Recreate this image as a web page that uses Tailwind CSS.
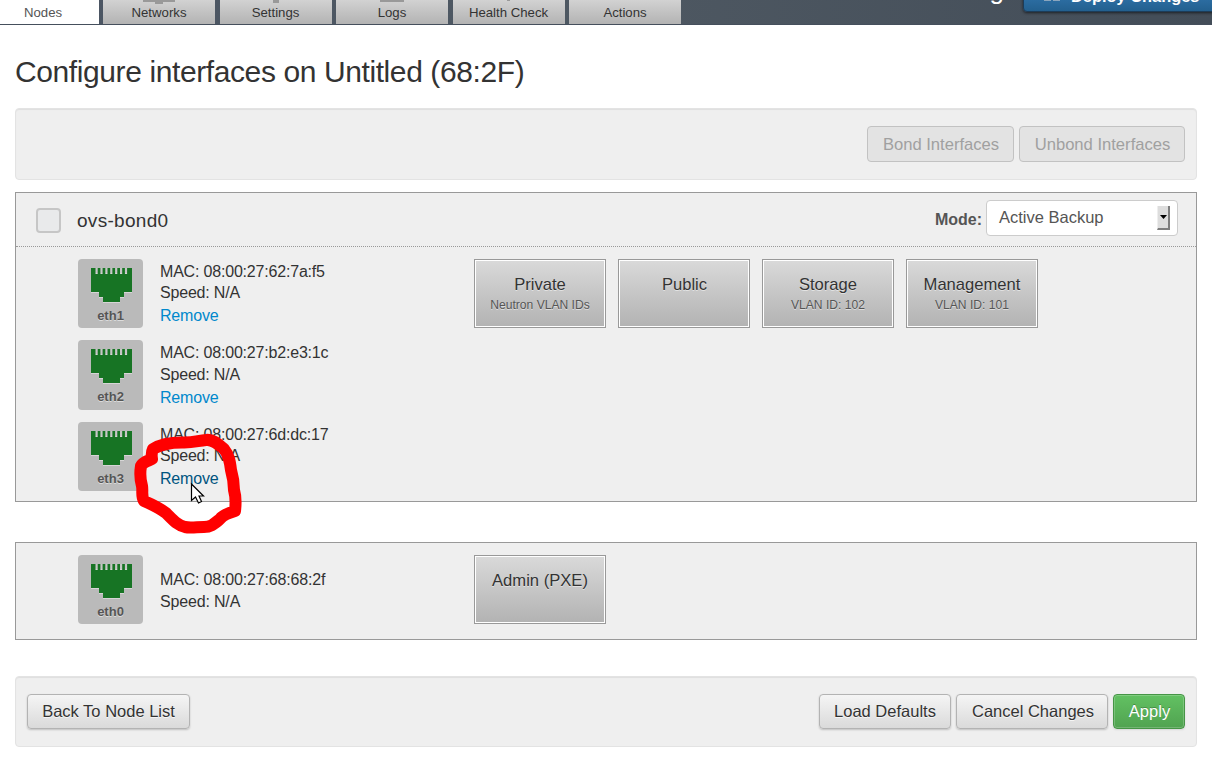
<!DOCTYPE html>
<html lang="en">
<head>
<meta charset="utf-8">
<title>Configure interfaces</title>
<script src="https://cdn.jsdelivr.net/npm/@tailwindcss/browser@4"></script>
</head>
<body class="w-[1212px] h-[762px] overflow-hidden relative bg-white text-[#333] font-['Liberation_Sans',sans-serif]">
<svg class="hidden">
  <symbol id="port" viewBox="0 0 41 36">
    <path fill="#d6d6d6" d="M0 1h41v24h-8v5h-4v5H12v-5H8v-5H0z"/>
    <path fill="#c6c6c6" d="M4 0h33v5H4z"/>
    <path fill="#177424" d="M0 0h4.500v6h2.200V0h2.700v6h2.200V0h2.700v6h2.200V0h2.700v6h2.200V0h2.700v6h2.200V0h2.700v6h2.200V0h2.700v6h2.200V0H41v24h-8v5h-4v5H12v-5H8v-5H0z"/>
  </symbol>
</svg>

<header class="h-[25px] flex items-start overflow-hidden bg-linear-to-r from-[#4b5563] via-[#4e5862] to-[#434d58] border-b border-[#454f5c]">
  <nav class="flex text-[13.2px] leading-[15px] text-center text-[#333]">
    <div class="w-[99px] h-[25px] bg-white pr-[13px] pt-[5px] text-[#555]">Nodes</div>
    <div class="flex gap-[4.500px] pl-[4px]">
      <div class="w-[112px] h-6 bg-linear-to-b from-[#d2d2d2] to-[#b3b3b3] flex flex-col items-center">
        <svg class="w-8 h-[5px]" viewBox="0 0 32 5"><path fill="#999" d="M0 0h32v2H20v2H12V2H0z"/></svg>Networks</div>
      <div class="w-[112px] h-6 bg-linear-to-b from-[#d2d2d2] to-[#b3b3b3] flex flex-col items-center">
        <svg class="w-8 h-[5px]" viewBox="0 0 32 5"><path fill="#999" d="M13 0h6v3h-6z"/></svg>Settings</div>
      <div class="w-[112px] h-6 bg-linear-to-b from-[#d2d2d2] to-[#b3b3b3] flex flex-col items-center">
        <svg class="w-8 h-[5px]" viewBox="0 0 32 5"><path fill="#999" d="M4 0h24v2H4z"/></svg>Logs</div>
      <div class="w-[112px] h-6 bg-linear-to-b from-[#d2d2d2] to-[#b3b3b3] flex flex-col items-center">
        <svg class="w-8 h-[5px]" viewBox="0 0 32 5"><path fill="#999" d="M14 0h3v1h-3z"/></svg>Health Check</div>
      <div class="w-[112px] h-6 bg-linear-to-b from-[#d2d2d2] to-[#b3b3b3] pt-[5px]">Actions</div>
    </div>
  </nav>
  <div class="ml-auto flex items-start">
    <div class="-mt-[25px] mr-[19px] text-[26px] leading-[30px] text-white">g</div>
    <button class="-mt-[24px] h-[36px] w-[230px] -mr-[41px] rounded-[4px] border border-[#1d3c58] bg-linear-to-b from-[#3d86c6] to-[#23608f] shadow-[0_1px_3px_rgba(0,0,0,.6)] flex items-start pl-[20px] pt-[9px] text-[16.4px] leading-[20px] font-bold text-white whitespace-nowrap text-shadow-[0_-1px_0_rgba(0,0,0,.25)]">
      <svg class="w-4 h-[15px] mr-[11px]" viewBox="0 0 16 15"><path fill="#8aa5bd" d="M0 0h7v15H0zM9 0h7v15H9z"/></svg>Deploy Changes</button>
  </div>
</header>

<main class="px-[15px]">
  <h1 class="mt-[27px] h-[40px] leading-[40px] text-[30px] tracking-[-0.4px] whitespace-nowrap">Configure interfaces on Untitled (68:2F)</h1>

  <div class="mt-[16px] h-[72px] rounded-[4px] bg-[#efefef] border border-[#e3e3e3] shadow-[inset_0_1px_1px_rgba(0,0,0,.07)] flex justify-end gap-[5px] pt-[17px] pr-[11px] text-[16.6px] text-[#a0a0a0] text-shadow-[0_1px_0_rgba(255,255,255,.8)]">
    <button class="w-[147px] h-[36px] rounded-[4px] border border-[#c2c2c2] bg-[#e3e3e3] pt-[2px] pl-px">Bond Interfaces</button>
    <button class="w-[166px] h-[36px] rounded-[4px] border border-[#c2c2c2] bg-[#e3e3e3] pt-[2px] pl-px">Unbond Interfaces</button>
  </div>

  <section class="mt-[12px] h-[310px] border border-[#999] bg-[#efefef]">
    <div class="h-[54px] border-b border-dotted border-[#999] flex items-center pl-[20px] pr-[18px]">
      <span class="size-[25px] rounded-[4px] border-2 border-[#c6c6c6] bg-[#e9eaeb] mt-px"></span>
      <span class="ml-[16px] mt-[2px] text-[19px] tracking-[0.3px] leading-[24px]">ovs-bond0</span>
      <span class="ml-auto text-[16px] font-bold text-[#555]">Mode:</span>
      <span class="ml-[4px] mb-[3px] w-[192px] h-[36px] rounded-[4px] border border-[#ccc] bg-white flex items-center justify-between pl-[12px] pr-[7px] text-[16.5px] text-[#555]">
        <span class="pb-[2px]">Active Backup</span>
        <span class="w-[13px] h-[24px] bg-[#ddd] border-r-2 border-b-2 border-[#7d7d7d] border-l border-l-[#eee] flex items-center justify-center"><svg class="w-[7px] h-1" viewBox="0 0 7 4"><path d="M0 0h7L3.500 4z"/></svg></span>
      </span>
    </div>
    <div class="flex pl-[62px] pt-[12px]">
      <div class="w-[396px] flex flex-col text-[16px] tracking-[-0.19px]">
        <div class="flex h-[81px] gap-[17px]">
          <div class="w-[65px] h-[69px] rounded-[4px] bg-[#bababa] flex flex-col items-center pt-[9px]"><svg class="w-[41px] h-[36px] ml-[2px]"><use href="#port"/></svg><b class="mt-[4px] text-[13px] leading-[15px] tracking-normal text-[#555] text-shadow-[0_1px_0_rgba(255,255,255,.5)]">eth1</b></div>
          <div class="pt-[2px]"><p class="leading-[21px]">MAC: 08:00:27:62:7a:f5</p><p class="leading-[21px]">Speed: N/A</p><a class="block leading-[25px] text-[#08c]">Remove</a></div>
        </div>
        <div class="flex h-[82px] gap-[17px]">
          <div class="w-[65px] h-[70px] rounded-[4px] bg-[#bababa] flex flex-col items-center pt-[9px]"><svg class="w-[41px] h-[36px] ml-[2px]"><use href="#port"/></svg><b class="mt-[4px] text-[13px] leading-[15px] tracking-normal text-[#555] text-shadow-[0_1px_0_rgba(255,255,255,.5)]">eth2</b></div>
          <div class="pt-[2px]"><p class="leading-[21px]">MAC: 08:00:27:b2:e3:1c</p><p class="leading-[23px]">Speed: N/A</p><a class="block leading-[23px] text-[#08c]">Remove</a></div>
        </div>
        <div class="flex h-[69px] gap-[17px]">
          <div class="w-[65px] h-[69px] rounded-[4px] bg-[#bababa] flex flex-col items-center pt-[9px]"><svg class="w-[41px] h-[36px] ml-[2px]"><use href="#port"/></svg><b class="mt-[4px] text-[13px] leading-[15px] tracking-normal text-[#555] text-shadow-[0_1px_0_rgba(255,255,255,.5)]">eth3</b></div>
          <div class="pt-[2px]"><p class="leading-[21px]">MAC: 08:00:27:6d:dc:17</p><p class="leading-[21px]">Speed: N/A</p><a class="block leading-[25px] text-[#005580]">Remove</a></div>
        </div>
      </div>
      <div class="flex gap-[12px] text-center text-[16.6px] leading-[20px] text-shadow-[0_1px_0_rgba(255,255,255,.5)]">
        <div class="w-[132px] h-[69px] border border-[#999] bg-white p-px"><div class="h-full bg-linear-to-b from-[#d9d9d9] to-[#b3b3b3] pt-[14px]">Private<small class="block text-[12.1px] text-[#555]">Neutron VLAN IDs</small></div></div>
        <div class="w-[132px] h-[69px] border border-[#999] bg-white p-px"><div class="h-full bg-linear-to-b from-[#d9d9d9] to-[#b3b3b3] pt-[14px] pl-px">Public</div></div>
        <div class="w-[132px] h-[69px] border border-[#999] bg-white p-px"><div class="h-full bg-linear-to-b from-[#d9d9d9] to-[#b3b3b3] pt-[14px]">Storage<small class="block text-[12.1px] text-[#555]">VLAN ID: 102</small></div></div>
        <div class="w-[132px] h-[69px] border border-[#999] bg-white p-px"><div class="h-full bg-linear-to-b from-[#d9d9d9] to-[#b3b3b3] pt-[14px]">Management<small class="block text-[12.1px] text-[#555]">VLAN ID: 101</small></div></div>
      </div>
    </div>
  </section>

  <section class="mt-[40px] h-[98px] border border-[#999] bg-[#efefef] flex pl-[62px] pt-[12px]">
    <div class="w-[396px] flex gap-[17px] text-[16px] tracking-[-0.17px]">
      <div class="w-[65px] h-[69px] rounded-[4px] bg-[#bababa] flex flex-col items-center pt-[9px]"><svg class="w-[41px] h-[36px] ml-[2px]"><use href="#port"/></svg><b class="mt-[4px] text-[13px] leading-[15px] tracking-normal text-[#555] text-shadow-[0_1px_0_rgba(255,255,255,.5)]">eth0</b></div>
      <div class="pt-[14px] leading-[22px]"><p>MAC: 08:00:27:68:68:2f</p><p>Speed: N/A</p></div>
    </div>
    <div class="w-[132px] h-[69px] border border-[#999] bg-white p-px text-center text-[16.6px] leading-[20px] text-shadow-[0_1px_0_rgba(255,255,255,.5)]"><div class="h-full bg-linear-to-b from-[#d9d9d9] to-[#b3b3b3] pt-[14px]">Admin (PXE)</div></div>
  </section>

  <footer class="mt-[36px] h-[71px] rounded-[4px] bg-[#efefef] border border-[#e3e3e3] shadow-[inset_0_1px_1px_rgba(0,0,0,.07)] flex gap-[5px] pt-[17px] px-[11px] text-[16.500px]">
    <button class="mr-auto w-[163px] h-[35px] rounded-[4px] border border-[#b3b3b3] bg-linear-to-b from-[#f5f5f5] to-[#dadada] shadow-[0_1px_2px_rgba(0,0,0,.2)] text-shadow-[0_1px_0_rgba(255,255,255,.7)]">Back To Node List</button>
    <button class="w-[132px] h-[35px] rounded-[4px] border border-[#b3b3b3] bg-linear-to-b from-[#f5f5f5] to-[#dadada] shadow-[0_1px_2px_rgba(0,0,0,.2)] text-shadow-[0_1px_0_rgba(255,255,255,.7)]">Load Defaults</button>
    <button class="w-[152px] h-[35px] rounded-[4px] border border-[#b3b3b3] bg-linear-to-b from-[#f5f5f5] to-[#dadada] shadow-[0_1px_2px_rgba(0,0,0,.2)] text-shadow-[0_1px_0_rgba(255,255,255,.7)] pl-[2px]">Cancel Changes</button>
    <button class="w-[72px] h-[35px] rounded-[4px] border border-[#469546] bg-linear-to-b from-[#62c162] to-[#51a351] shadow-[inset_0_0_0_1px_rgba(255,255,255,.2),0_1px_2px_rgba(0,0,0,.1)] text-white text-shadow-[0_-1px_0_rgba(0,0,0,.25)] pl-px">Apply</button>
  </footer>
</main>

<!-- Hand-drawn annotation and mouse pointer -->
<svg class="absolute left-[120px] top-[410px] size-[140px]" viewBox="0 0 140 140">
  <path fill="none" stroke="#f00" stroke-width="12" stroke-linejoin="round" stroke-linecap="round" d="M33 39C41 34 51 32.500 62 32.500C72 33 77 31 86 30C93 29 98 34 104 39C109 45 110 52 111 60C113 67 114 72 114 80C116 87 116 93 115 101C108 103 103 105 100 109C94 114 91 117 84 117C77 117 70 118 65 117C57 115 53 110 46 103C38 97 31 94 24 91C21 86 23 81 22 76C20 69 20 62 21 56C23 52 28 51 32 49Q31 43 33 39Z"/>
  <path fill="#fff" stroke="#000" stroke-width="1.200" d="M71.500 74v16.500l4-3.500 3 6 3-1.500-2.500-5.500h4.500z"/>
</svg>
</body>
</html>
